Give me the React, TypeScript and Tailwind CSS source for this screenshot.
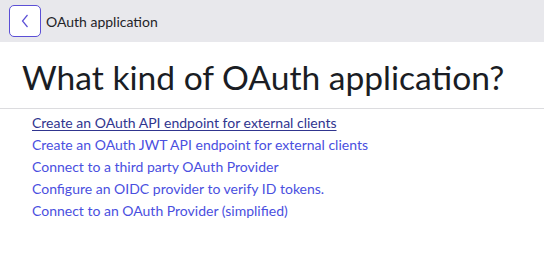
const options = [
  "Create an OAuth API endpoint for external clients",
  "Create an OAuth JWT API endpoint for external clients",
  "Connect to a third party OAuth Provider",
  "Configure an OIDC provider to verify ID tokens.",
  "Connect to an OAuth Provider (simplified)",
];

export default function App() {
  return (
    <div
      className="w-[544px] h-[253px] bg-white text-[#1f2328]"
      style={{ fontFamily: "Lato, 'Noto Sans', sans-serif" }}
    >
      <header className="h-[42px] bg-[#e8e8ec] flex items-center pl-[9px]">
        <button className="w-[32px] h-[32px] bg-white border border-[#5b4fd6] rounded-[5px] flex items-center justify-center">
          <svg width="10" height="16" viewBox="0 0 10 16" fill="none">
            <path d="M7.5 2 L2.5 8 L7.5 14" stroke="#5b4fd6" strokeWidth="1.2" />
          </svg>
        </button>
        <span className="ml-[5px] text-[14px] text-[#1f2328]">OAuth application</span>
      </header>
      <h1 className="px-[22px] pt-[15px] pb-[11px] text-[33.6px] leading-[40px] text-[#1a1d24] border-b border-[#dcdcdf]">
        What kind of OAuth application?
      </h1>
      <ul className="pl-[32px] pt-[3px] flex flex-col">
        {options.map((o, i) => (
          <li key={o} className="h-[22px] leading-[22px] text-[14px]">
            <a
              href="#"
              className={
                i === 0
                  ? "text-[#30358f] underline underline-offset-2"
                  : "text-[#4a4fe0]"
              }
            >
              {o}
            </a>
          </li>
        ))}
      </ul>
    </div>
  );
}
